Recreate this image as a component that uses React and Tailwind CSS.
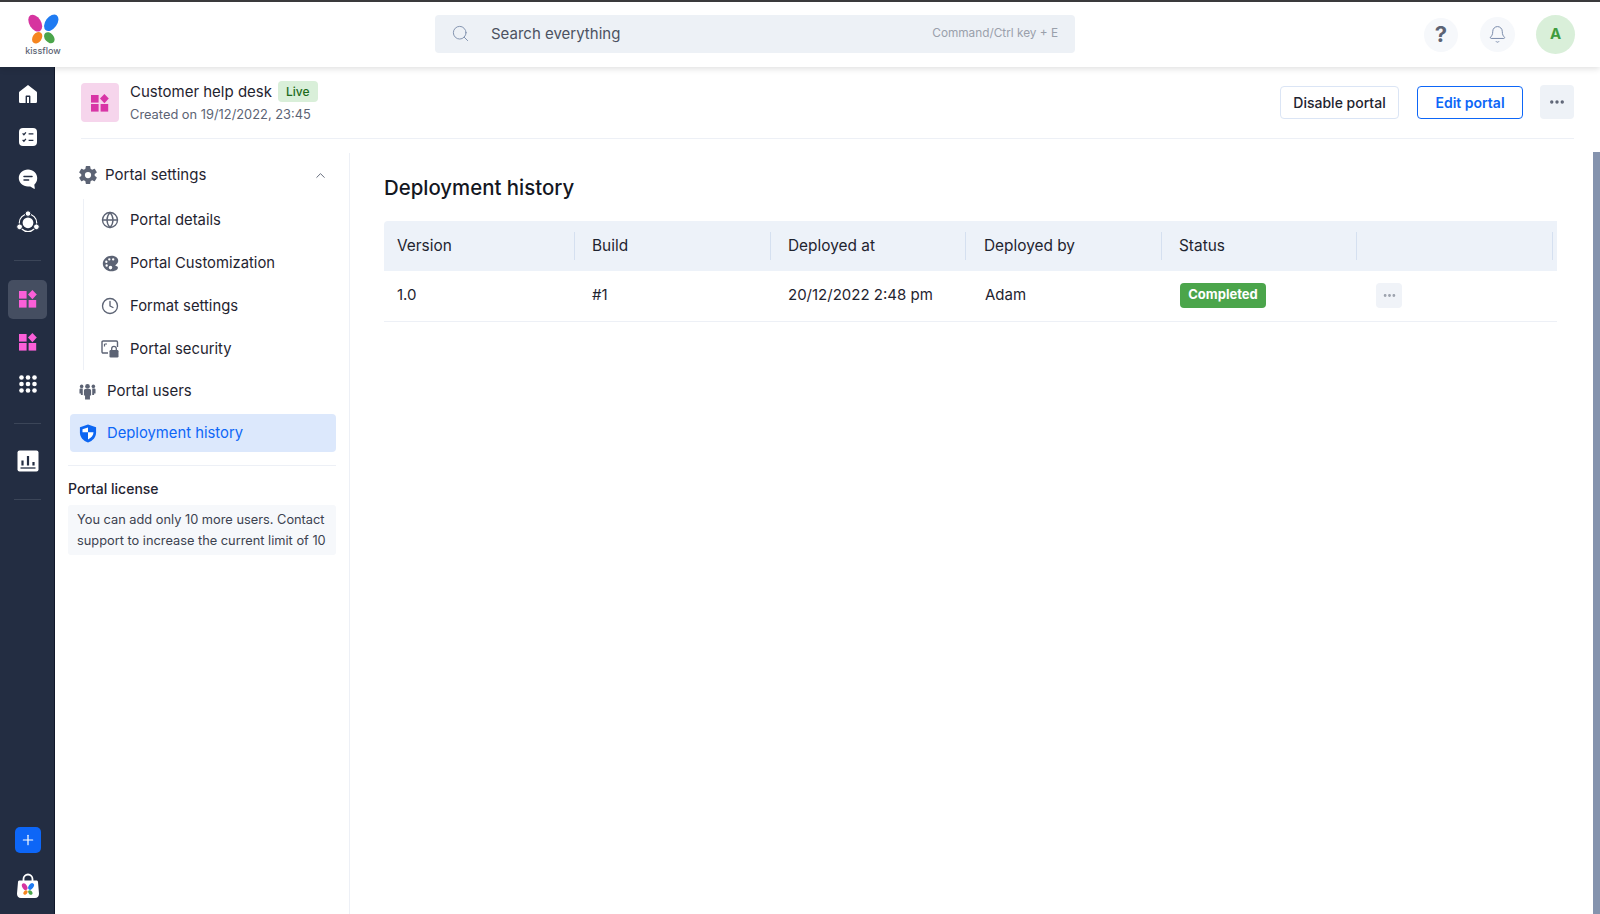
import React from "react";
import { Search, Bell, ChevronUp, Globe, Clock, Plus, MoreHorizontal } from "lucide-react";
import { IoSettingsSharp, IoColorPalette } from "react-icons/io5";

const Butterfly = ({ className }) => (
  <svg viewBox="0 0 36 30" className={className}>
    <ellipse cx="9.5" cy="9" rx="6" ry="9.5" fill="#d6349f" transform="rotate(-32 9.5 9)" />
    <ellipse cx="26" cy="8.5" rx="6" ry="9.5" fill="#1f7bf2" transform="rotate(36 26 8.5)" />
    <ellipse cx="11.5" cy="24" rx="4.6" ry="6.4" fill="#f5851f" transform="rotate(36 11.5 24)" />
    <ellipse cx="24" cy="24" rx="4.6" ry="6.4" fill="#4ba54b" transform="rotate(-40 24 24)" />
  </svg>
);

const WidgetIcon = ({ color, className }) => (
  <svg viewBox="0 0 18 18" className={className} fill={color}>
    <rect x="0" y="1" width="7.6" height="7.6" />
    <rect x="0" y="10" width="7.6" height="7.6" />
    <rect x="9.6" y="10" width="7.6" height="7.6" />
    <path d="M13.4 0l4.4 4.6-4.4 4.6L9 4.6z" />
  </svg>
);

const HomeIcon = () => (
  <svg viewBox="0 0 20 20" className="w-[20px] h-[20px]">
    <path fillRule="evenodd" fill="#fff" d="M10 1L1.6 7.4C1.2 7.7 1 8.2 1 8.7V17.4C1 18.3 1.7 19 2.6 19H17.4C18.3 19 19 18.3 19 17.4V8.7C19 8.2 18.8 7.7 18.4 7.4zM7.6 19V12.6C7.6 12 8 11.6 8.6 11.6H11.4C12 11.6 12.4 12 12.4 12.6V19H11V13H9V19z" />
  </svg>
);

const TasksIcon = () => (
  <svg viewBox="0 0 20 20" className="w-[20px] h-[20px]">
    <rect x="1" y="1" width="18" height="18" rx="4" fill="#fff" />
    <path d="M4.6 6.4l1.3 1.3 2-2.4M4.6 12.9l1.3 1.3 2-2.4M10.6 6.8h4.8M10.6 13.3h4.8" stroke="#232d42" strokeWidth="1.3" fill="none" />
  </svg>
);

const ChatIcon = () => (
  <svg viewBox="0 0 20 20" className="w-[20px] h-[20px]">
    <path fill="#fff" d="M10 .6C4.8.6.8 4.3.8 9.1c0 4.8 4 8.5 9.2 8.5.8 0 1.5-.1 2.2-.2l3.8 2.4c.5.3.9 0 .8-.5l-.5-3.5c1.9-1.6 2.9-3.9 2.9-6.7C19.2 4.3 15.2.6 10 .6z" />
    <path d="M6 7.6h8M6 11h4.6" stroke="#232d42" strokeWidth="1.5" strokeLinecap="round" />
  </svg>
);

const FlowIcon = () => (
  <svg viewBox="0 0 24 24" className="w-[24px] h-[24px]">
    <circle cx="12" cy="12.8" r="8.7" fill="none" stroke="#fff" strokeWidth="1.2" />
    <circle cx="12" cy="12.8" r="5.4" fill="#fff" />
    <circle cx="12" cy="3.6" r="2.8" fill="#fff" stroke="#232d42" strokeWidth="1" />
    <circle cx="3.6" cy="16.8" r="2.9" fill="#fff" stroke="#232d42" strokeWidth="1" />
    <circle cx="20.4" cy="16.8" r="2.9" fill="#fff" stroke="#232d42" strokeWidth="1" />
  </svg>
);

const GridIcon = () => (
  <svg viewBox="0 0 18 18" className="w-[18px] h-[18px]" fill="#fff">
    {[2.5, 9, 15.5].map((y) =>
      [2.5, 9, 15.5].map((x) => <circle key={`${x}-${y}`} cx={x} cy={y} r="2.3" />)
    )}
  </svg>
);

const ChartIcon = () => (
  <svg viewBox="0 0 22 22" className="w-[22px] h-[22px]">
    <rect x="0.5" y="0.5" width="21" height="21" rx="2" fill="#fff" />
    <path d="M5.5 10.5v5M11 6v9.5M16.5 12v3.5" stroke="#232d42" strokeWidth="2.2" />
    <path d="M3.5 18h15" stroke="#232d42" strokeWidth="1.3" />
  </svg>
);

const BagIcon = () => (
  <div className="relative w-[24px] h-[26px]">
    <svg viewBox="0 0 24 26" className="w-[24px] h-[26px]">
      <path d="M7.5 8V6a4.5 4.5 0 0 1 9 0v2" fill="none" stroke="#fff" strokeWidth="1.8" />
      <path fill="#fff" d="M3.5 7.5h17c.8 0 1.4.6 1.5 1.4l1 11.6c.2 2.6-1.4 4.5-4 4.5H5c-2.6 0-4.2-1.9-4-4.5l1-11.6c.1-.8.7-1.4 1.5-1.4z" />
    </svg>
    <Butterfly className="absolute left-[5px] top-[10px] w-[14px] h-[12px]" />
  </div>
);

const SecurityIcon = () => (
  <svg viewBox="0 0 18 18" className="w-[18px] h-[18px]">
    <path d="M7 13H2.2C1.5 13 1 12.5 1 11.8V2.2C1 1.5 1.5 1 2.2 1h13.1c.7 0 1.2.5 1.2 1.2V7" fill="none" stroke="#5c6374" strokeWidth="1.4" />
    <path d="M3.5 4h2.5M3.5 4v2.5" stroke="#5c6374" strokeWidth="1.2" fill="none" />
    <rect x="8.5" y="10" width="9" height="7.5" rx="1.2" fill="#5c6374" />
    <path d="M10.7 10V8.7a2.3 2.3 0 0 1 4.6 0V10" fill="none" stroke="#5c6374" strokeWidth="1.3" />
  </svg>
);

const UsersIcon = () => (
  <svg viewBox="0 0 18 18" className="w-[17px] h-[17px]" fill="#5c6374">
    <circle cx="9" cy="3.6" r="2.5" />
    <circle cx="2.8" cy="3.6" r="1.9" />
    <circle cx="15.2" cy="3.6" r="1.9" />
    <path d="M5.2 8c0-1 .8-1.7 1.7-1.7h4.2c.9 0 1.7.7 1.7 1.7v5.200h-1.2V17.5H6.400v-4.300H5.200z" />
    <path d="M0.5 7c0-.7.5-1.2 1.2-1.2h2.300v7H2v-1.800H.5zM17.5 7c0-.7-.5-1.200-1.200-1.200H14v7h2v-1.800h1.500z" />
  </svg>
);

const ShieldIcon = () => (
  <svg viewBox="0 0 18 20" className="w-[18px] h-[19px]">
    <path fill="#0d66f2" d="M9 .5L17.5 3.3V9c0 5-3.4 8.800-8.500 10.500C3.900 17.800.5 14 .5 9V3.300z" />
    <path fill="#fff" d="M9 3.600L3.200 5.500V8.800H9zM9 8.800V16.200C12.400 14.900 14.800 12.200 14.800 8.800z" />
  </svg>
);

const RailItem = ({ children, active }) => (
  <div className="h-[42.5px] flex items-center justify-center">
    {active ? (
      <div className="w-[39px] h-[39px] rounded-[5px] bg-[#454e61] flex items-center justify-center">{children}</div>
    ) : (
      children
    )}
  </div>
);

const RailDivider = ({ className }) => <div className={`mx-[13px] h-px bg-[#3b4558] ${className}`} />;

const SubItem = ({ icon, label }) => (
  <div className="h-[42.8px] flex items-center text-[14.8px] text-[#1f2430]">
    <div className="w-[24px] mr-[8px] ml-[14px] flex justify-center text-[#5c6374]">{icon}</div>
    {label}
  </div>
);

const columns = [
  { label: "Version", value: "1.0", cls: "w-[191px]", head: "pl-[13px]", cell: "pl-[13px]" },
  { label: "Build", value: "#1", cls: "w-[196px]", head: "pl-[17px]", cell: "pl-[17px]" },
  { label: "Deployed at", value: "20/12/2022 2:48 pm", cls: "w-[195px]", head: "pl-[17px]", cell: "pl-[17px]" },
  { label: "Deployed by", value: "Adam", cls: "w-[196px]", head: "pl-[18px]", cell: "pl-[19px]" },
];

export default function App() {
  return (
    <div className="h-screen flex flex-col overflow-hidden bg-white font-['Inter',sans-serif] text-[#1f2430]">
      <header className="relative z-10 h-[67px] shrink-0 border-t-2 border-[#3a3a3c] bg-white shadow-[0_2px_6px_rgba(0,0,0,0.12)] flex items-center">
        <div className="w-[86px] shrink-0 flex flex-col items-center">
          <Butterfly className="w-[35px] h-[30px]" />
          <span className="mt-[2px] text-[9px] leading-[10px] font-medium text-[#5c6374]">kissflow</span>
        </div>
        <div className="ml-[349px] mb-[2px] w-[640px] h-[38px] rounded-[4px] bg-[#edf1f6] flex items-center pl-[16px] pr-[17px]">
          <Search size={19} strokeWidth={1.2} className="text-[#7f90ad]" />
          <span className="ml-[21px] mt-[1px] text-[15px] text-[#4c5261]">Search everything</span>
          <span className="ml-auto mt-[1px] text-[11.8px] text-[#9aa0ab]">Command/Ctrl key + E</span>
        </div>
        <div className="ml-auto pr-[25px] flex items-center">
          <div className="w-[34px] h-[34px] rounded-full bg-[#f6f8fb] flex items-center justify-center text-[22px] font-bold text-[#5c6374]">?</div>
          <div className="ml-[22px] w-[35px] h-[35px] rounded-full bg-[#f6f8fb] flex items-center justify-center">
            <Bell size={19} strokeWidth={1.2} className="text-[#7486a6]" />
          </div>
          <div className="ml-[21px] w-[39px] h-[39px] rounded-full bg-[#d9efd9] flex items-center justify-center text-[15px] font-bold text-[#3f9c3f]">A</div>
        </div>
      </header>

      <div className="flex-1 min-h-0 flex">
        <nav className="w-[55px] shrink-0 bg-[#232d42] border-r border-[#10172a] flex flex-col pl-[1px] pt-[6px] pb-[15px]">
          <RailItem><HomeIcon /></RailItem>
          <RailItem><TasksIcon /></RailItem>
          <RailItem><ChatIcon /></RailItem>
          <RailItem><FlowIcon /></RailItem>
          <RailDivider className="mt-[17px] mb-[17px]" />
          <RailItem active><WidgetIcon color="#fb5fd8" className="w-[18px] h-[18px]" /></RailItem>
          <RailItem><WidgetIcon color="#fb5fd8" className="w-[18px] h-[18px]" /></RailItem>
          <RailItem><GridIcon /></RailItem>
          <RailDivider className="mt-[17px] mb-[16px]" />
          <RailItem><ChartIcon /></RailItem>
          <RailDivider className="mt-[17px]" />
          <div className="mt-auto flex flex-col items-center">
            <div className="w-[26px] h-[26px] rounded-[5px] bg-[#0d66f7] flex items-center justify-center">
              <Plus size={16} strokeWidth={1.8} className="text-white" />
            </div>
            <div className="mt-[20px]"><BagIcon /></div>
          </div>
        </nav>

        <main className="flex-1 min-w-0 flex flex-col">
          <div className="ml-[26px] mr-[26px] h-[72px] shrink-0 border-b border-[#edf0f6] flex pt-[16px]">
            <div className="w-[38px] h-[39px] rounded-[4px] bg-[#f6d5ec] flex items-center justify-center">
              <WidgetIcon color="#d835a6" className="w-[18px] h-[18px]" />
            </div>
            <div className="ml-[11px] -mt-[2px]">
              <div className="flex items-center h-[21px]">
                <span className="text-[15px] mt-[1px]">Customer help desk</span>
                <span className="ml-[6px] h-[21px] px-[8px] rounded-[4px] bg-[#d9efd9] text-[12px] font-medium text-[#1c6b1c] flex items-center">Live</span>
              </div>
              <div className="mt-[3px] text-[12.85px] text-[#5c6374]">Created on 19/12/2022, 23:45</div>
            </div>
            <div className="ml-auto flex items-start pt-[3px]">
              <button className="w-[119px] h-[33px] rounded-[4px] border-[1.5px] border-[#dbe5f5] text-[14px] font-medium text-[#1f2430]">Disable portal</button>
              <button className="ml-[18px] w-[106px] h-[33px] rounded-[4px] border-[1.5px] border-[#0d66f7] text-[14px] font-semibold text-[#0d66f7]">Edit portal</button>
              <button className="ml-[17px] -mt-px w-[34px] h-[34px] rounded-[4px] bg-[#eef2f7] flex items-center justify-center">
                <MoreHorizontal size={18} strokeWidth={2.5} className="text-[#5c6374]" />
              </button>
            </div>
          </div>

          <div className="flex-1 min-h-0 flex mt-[14px]">
            <aside className="w-[295px] shrink-0 border-r border-[#edf0f6] pl-[13px] pr-[13px]">
              <div className="h-[44px] flex items-center text-[15px] pl-[10px]">
                <IoSettingsSharp size={20} className="text-[#5c6374]" />
                <span className="ml-[7px]">Portal settings</span>
                <ChevronUp size={15} strokeWidth={1.5} className="ml-auto mr-[8px] text-[#5c6374]" />
              </div>
              <div className="ml-[15px] mt-[2px] border-l border-[#edf0f6]">
                <SubItem icon={<Globe size={18} strokeWidth={1.8} />} label="Portal details" />
                <SubItem icon={<IoColorPalette size={19} />} label="Portal Customization" />
                <SubItem icon={<Clock size={18} strokeWidth={1.8} />} label="Format settings" />
                <SubItem icon={<SecurityIcon />} label="Portal security" />
              </div>
              <div className="h-[42px] flex items-center text-[15px] pl-[11px]">
                <UsersIcon />
                <span className="ml-[11px]">Portal users</span>
              </div>
              <div className="ml-[2px] mt-[2px] h-[38px] rounded-[4px] bg-[#dce8fc] flex items-center text-[14.8px] text-[#0d66f7] pl-[9px]">
                <ShieldIcon />
                <span className="ml-[10px]">Deployment history</span>
              </div>
              <div className="mt-[13px] border-t border-[#edf0f6] pt-[13px] text-[14px] leading-[20px] font-medium">Portal license</div>
              <div className="mt-[6px] h-[50px] rounded-[3px] bg-[#f6f8fb] pl-[9px] pt-[4px] text-[12.8px] leading-[21px] text-[#3c4250] whitespace-nowrap">
                You can add only 10 more users. Contact<br />support to increase the current limit of 10
              </div>
            </aside>

            <section className="flex-1 min-w-0 pl-[34px] pr-[36px] pt-[21px]">
              <h1 className="text-[20.4px] leading-[28px] font-medium text-[#14171f]">Deployment history</h1>
              <div className="mt-[19px] h-[50px] rounded-tl-[4px] bg-[#edf2f9] flex items-center text-[15.4px]">
                {columns.map((c) => (
                  <div key={c.label} className={`${c.cls} ${c.head} h-[28px] border-r border-[#d5e0f0] flex items-center`}>{c.label}</div>
                ))}
                <div className="w-[195px] pl-[17px] h-[28px] border-r border-[#d5e0f0] flex items-center">Status</div>
                <div className="w-[196px] h-[28px] border-r border-[#d5e0f0]" />
              </div>
              <div className="h-[51px] pb-[2px] border-b border-[#edf0f6] flex items-center text-[15px]">
                {columns.map((c) => (
                  <div key={c.label} className={`${c.cls} ${c.cell}`}>{c.value}</div>
                ))}
                <div className="w-[195px] pl-[18px]">
                  <span className="inline-flex items-center w-[86px] h-[25px] justify-center rounded-[4px] bg-[#4ba54b] text-[13px] font-bold text-white">Completed</span>
                </div>
                <div className="pl-[19px]">
                  <div className="w-[26px] h-[25px] rounded-[4px] bg-[#f0f3f8] flex items-center justify-center">
                    <MoreHorizontal size={15} strokeWidth={2.5} className="text-[#9aa0ab]" />
                  </div>
                </div>
              </div>
            </section>

            <div className="w-[7px] shrink-0 -mt-[1px] bg-[#8593ae]" />
          </div>
        </main>
      </div>
    </div>
  );
}
